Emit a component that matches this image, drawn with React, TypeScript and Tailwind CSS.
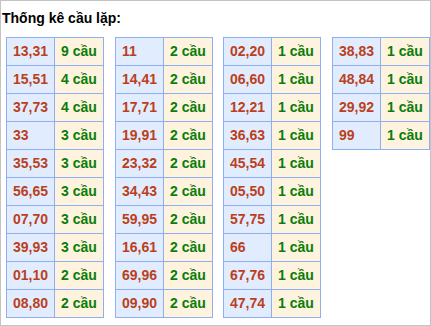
const TABLES: [string, number][][] = [
  [['13,31', 9], ['15,51', 4], ['37,73', 4], ['33', 3], ['35,53', 3], ['56,65', 3], ['07,70', 3], ['39,93', 3], ['01,10', 2], ['08,80', 2]],
  [['11', 2], ['14,41', 2], ['17,71', 2], ['19,91', 2], ['23,32', 2], ['34,43', 2], ['59,95', 2], ['16,61', 2], ['69,96', 2], ['09,90', 2]],
  [['02,20', 1], ['06,60', 1], ['12,21', 1], ['36,63', 1], ['45,54', 1], ['05,50', 1], ['57,75', 1], ['66', 1], ['67,76', 1], ['47,74', 1]],
  [['38,83', 1], ['48,84', 1], ['29,92', 1], ['99', 1]],
];

export default function App() {
  return (
    <div
      className="w-[431px] h-[326px] border border-[#c4c4c4] bg-white text-[14px] font-bold"
      style={{ fontFamily: '"Liberation Sans", Arial, sans-serif' }}
    >
      <div className="pl-[1px] pt-[7px] h-[36px] leading-[20px] text-black">Thống kê cầu lặp:</div>
      <div className="flex items-start gap-[10px] pl-[5px]">
        {TABLES.map((rows, t) => (
          <div key={t} className={'border-l border-t border-[#8eb0f3] ' + (t % 2 === 1 ? 'ml-[1px]' : '')}>
            {rows.map(([pair, n]) => (
              <div key={pair} className="flex h-[28px]">
                <div className="w-[48px] flex items-center pl-[6px] bg-[#e1edfe] text-[#bb3f1c] border-r border-b border-[#8eb0f3]">
                  {pair}
                </div>
                <div className="w-[49px] flex items-center pl-[6px] bg-[#fef3df] text-[#0a7d0a] border-r border-b border-[#8eb0f3]">
                  {n} cầu
                </div>
              </div>
            ))}
          </div>
        ))}
      </div>
    </div>
  );
}
